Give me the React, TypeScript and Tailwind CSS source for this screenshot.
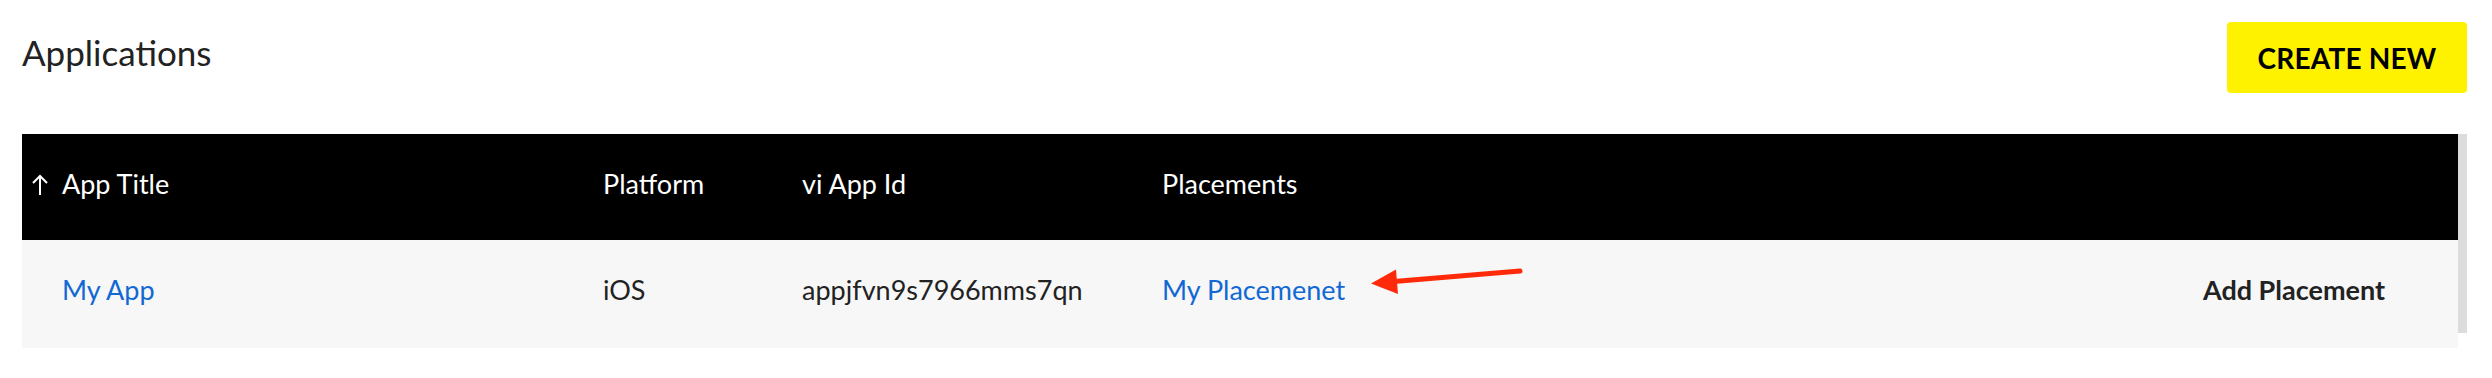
import { ReactNode } from 'react';

const SortArrow = () => (
  <svg width="18" height="22" viewBox="0 0 18 22" fill="none" stroke="white" strokeWidth="2">
    <path d="M9 21V2" />
    <path d="M2 9l7-7 7 7" />
  </svg>
);

const Cell = ({ children, className = '' }: { children: ReactNode; className?: string }) => (
  <div className={`flex items-center ${className}`}>{children}</div>
);

export default function App() {
  return (
    <div
      className="w-[2492px] h-[378px] bg-white pl-[22px] pr-[25px] text-[#222]"
      style={{ fontFamily: 'Lato, "Liberation Sans", sans-serif' }}
    >
      <div className="flex items-center justify-between pt-[22px] h-[115px] pb-[22px]">
        <h1 className="text-[35px] font-normal leading-none text-[#222] pb-[10px]">Applications</h1>
        <button className="w-[240px] h-[71px] rounded-[4px] bg-[#fff200] text-[28px] font-bold text-black tracking-[0.2px]">
          CREATE NEW
        </button>
      </div>

      <div className="mt-[19px] flex">
        <div className="w-[2436px]">
          <div className="grid grid-cols-[581px_199px_360px_1fr_auto] h-[106px] pb-[5px] bg-black text-white text-[27px]">
            <Cell className="pl-[9px] gap-[13px]">
              <SortArrow />
              <span>App Title</span>
            </Cell>
            <Cell>Platform</Cell>
            <Cell>vi App Id</Cell>
            <Cell>Placements</Cell>
            <Cell />
          </div>

          <div className="relative grid grid-cols-[581px_199px_360px_1fr_auto] h-[108px] pb-[8px] bg-[#f7f7f7] text-[27px]">
            <Cell className="pl-[40px]">
              <a className="text-[#1269d3]">My App</a>
            </Cell>
            <Cell>iOS</Cell>
            <Cell>appjfvn9s7966mms7qn</Cell>
            <Cell>
              <a className="text-[#1269d3]">My Placemenet</a>
            </Cell>
            <Cell className="pr-[73px] font-bold">Add Placement</Cell>

            <svg className="absolute left-0 top-0 pointer-events-none" width="2436" height="108">
              <line x1="1498" y1="31" x2="1372" y2="41.5" stroke="#ff2a0a" strokeWidth="5" strokeLinecap="round" />
              <polygon points="1349,43.5 1374,29.5 1376,54" fill="#ff2a0a" />
            </svg>
          </div>
        </div>
        <div className="w-[9px] h-[199px] bg-[#dcdcdc]" />
      </div>
    </div>
  );
}
